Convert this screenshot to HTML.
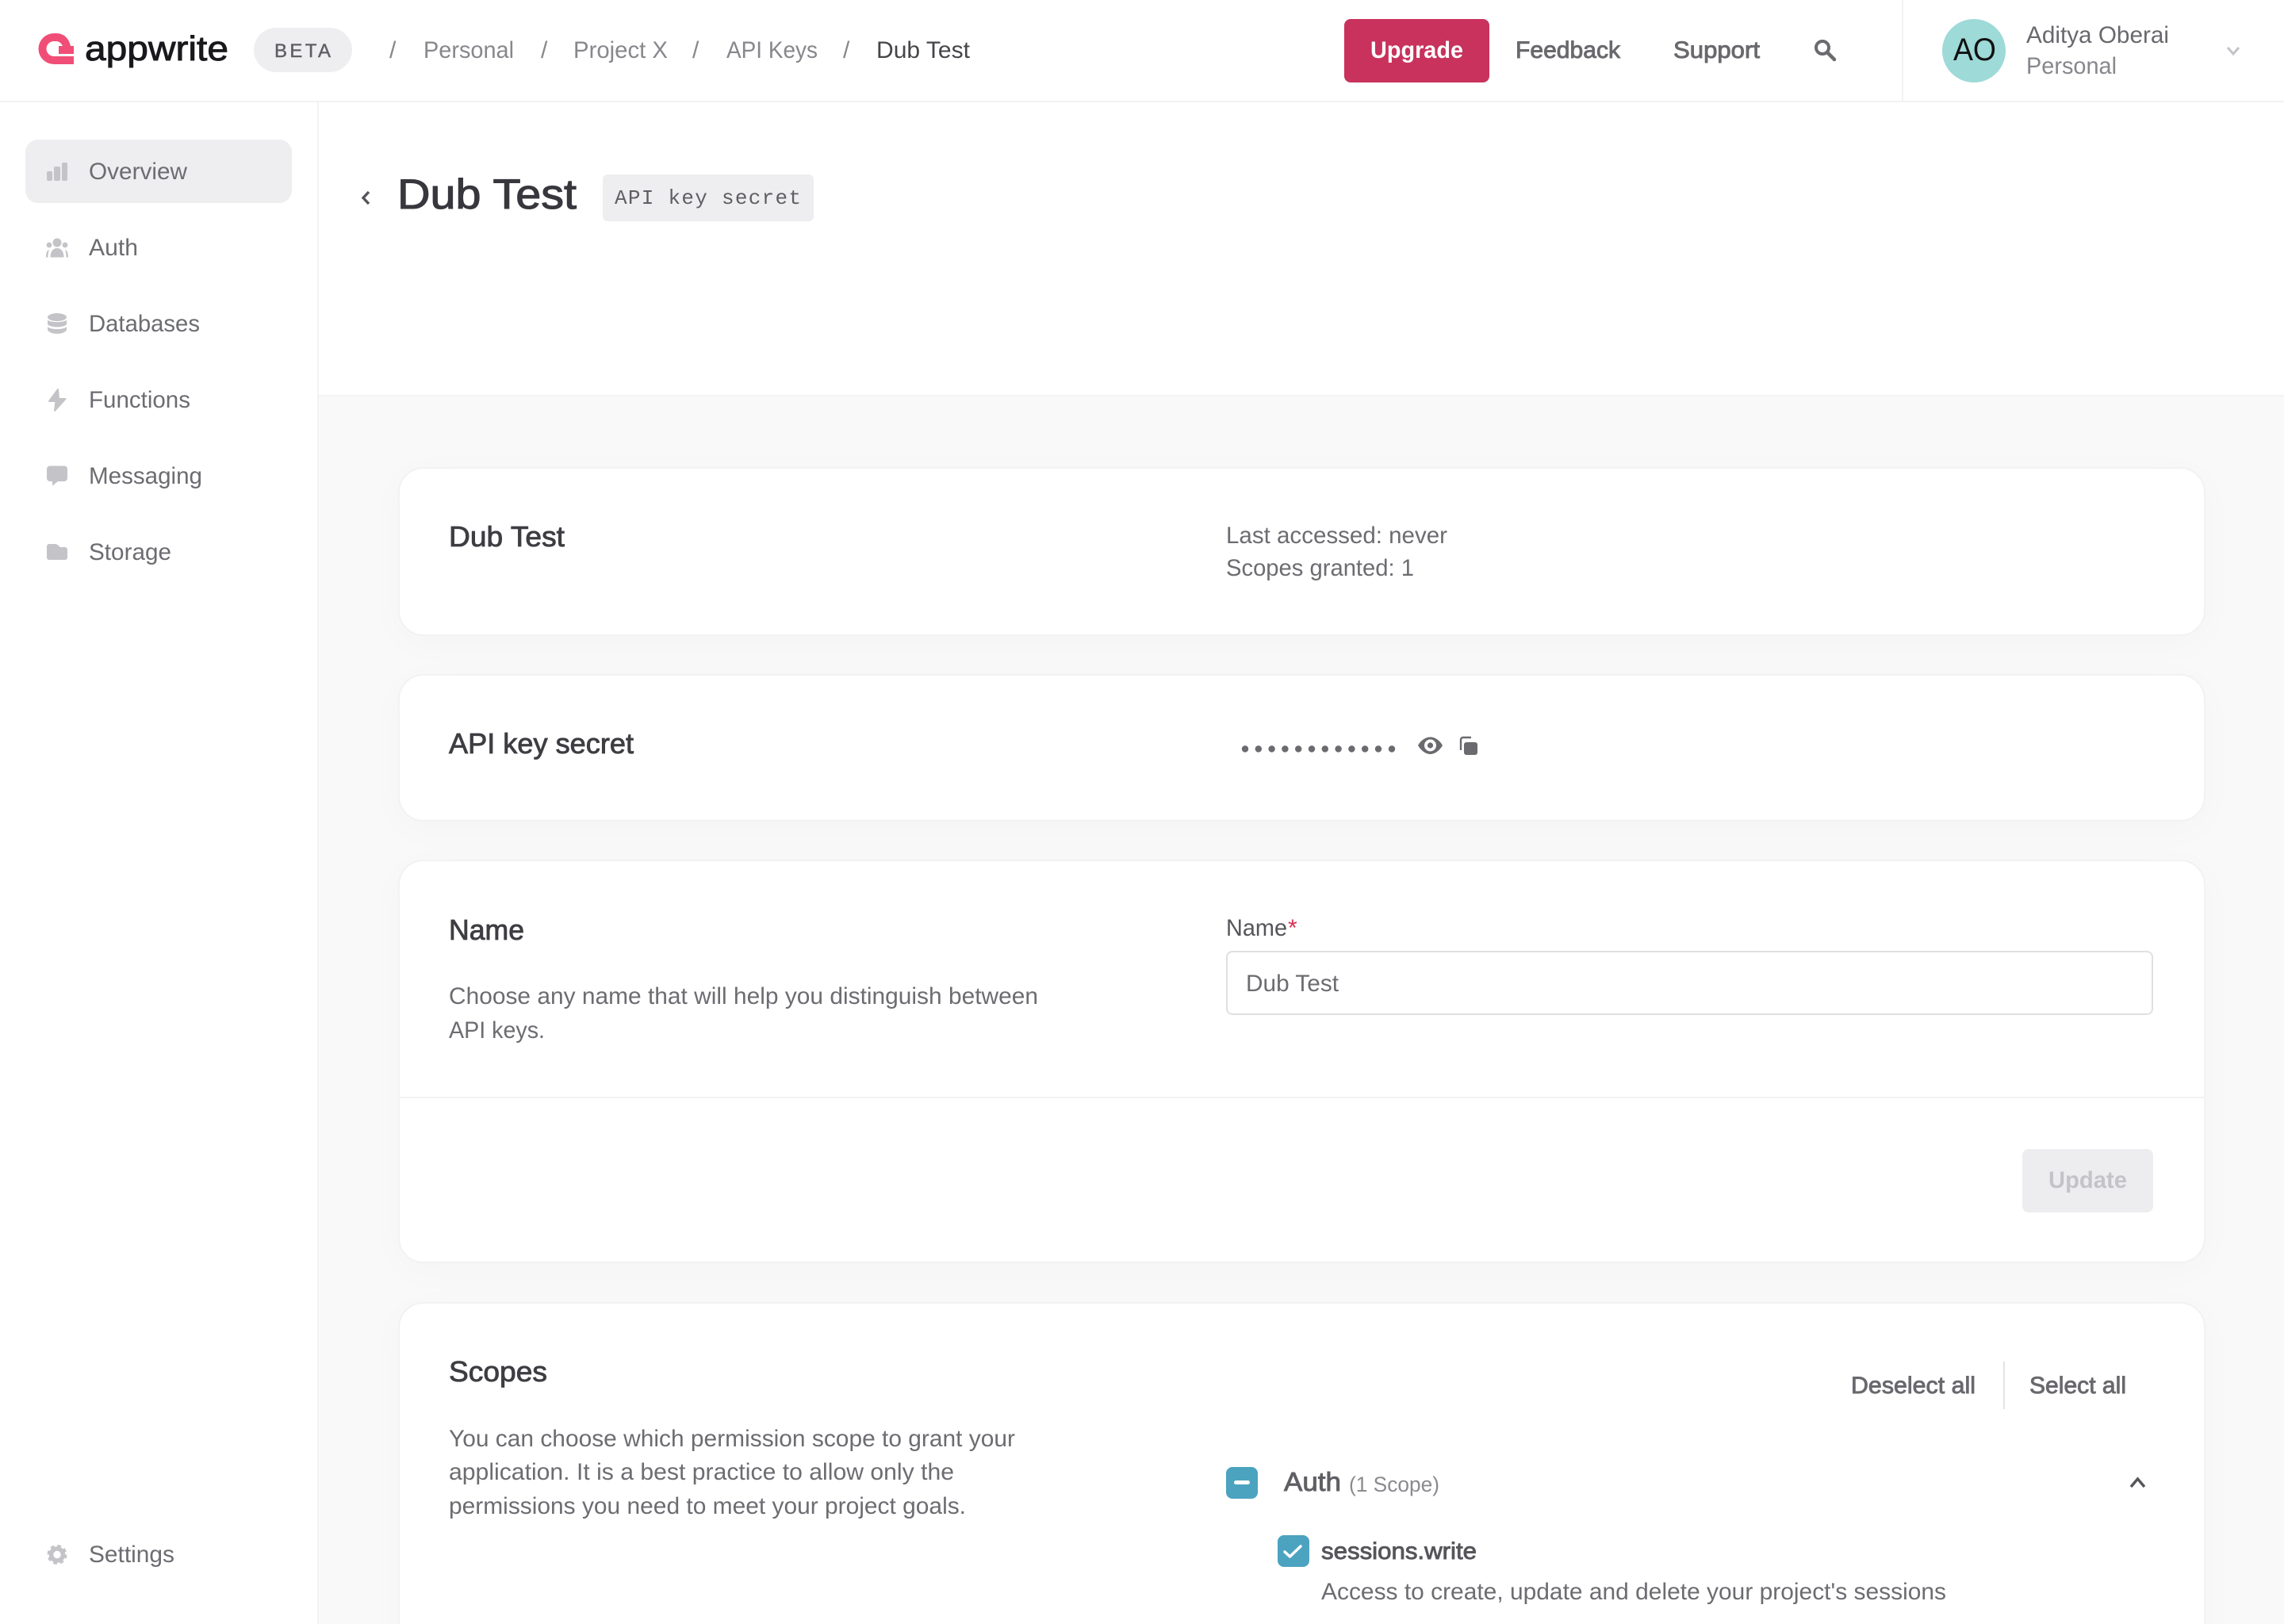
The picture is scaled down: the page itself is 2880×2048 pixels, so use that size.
<!DOCTYPE html>
<html><head><meta charset="utf-8"><title>Dub Test</title>
<style>
html,body{margin:0;padding:0;width:2880px;height:2048px;overflow:hidden;background:#f9f9f9}
#wrap{position:relative;width:2880px;height:2048px;overflow:hidden;background:#f9f9f9}
.b{position:absolute;box-sizing:border-box}
.card{position:absolute;left:502px;width:2279px;background:#fff;border:2px solid #f2f2f3;border-radius:32px;box-sizing:border-box;box-shadow:0 10px 50px rgba(0,0,0,.022)}
svg{position:absolute;left:0;top:0}
text{font-family:"Liberation Sans",sans-serif;font-size:30px;fill:#6c6c71}
.m{stroke:currentColor;stroke-width:.6px}
.h{font-size:36px;fill:#3d3d42;color:#3d3d42;stroke-width:.85px}
</style></head><body>
<div id="wrap">
<div class="b" style="left:0;top:0;width:2880px;height:129px;background:#fff;border-bottom:2px solid #f2f2f3"></div>
<div class="b" style="left:0;top:129px;width:402px;height:1919px;background:#fff;border-right:2px solid #f3f3f4"></div>
<div class="b" style="left:402px;top:129px;width:2478px;height:371px;background:#fff;border-bottom:2px solid #f3f3f4"></div>
<div class="b" style="left:2398px;top:0;width:2px;height:127px;background:#f3f3f4"></div>
<div class="b" style="left:32px;top:176px;width:336px;height:80px;background:#eeeef0;border-radius:16px"></div>
<div class="b" style="left:320px;top:35px;width:124px;height:56px;background:#eeeef0;border-radius:28px"></div>
<div class="b" style="left:1695px;top:24px;width:183px;height:80px;background:#c8325c;border-radius:8px"></div>
<div class="b" style="left:2449px;top:24px;width:80px;height:80px;background:#9ddad8;border-radius:50%"></div>
<div class="b" style="left:760px;top:220px;width:266px;height:59px;background:#eeeef0;border-radius:6px"></div>
<div class="card" style="top:589px;height:213px"></div>
<div class="card" style="top:850px;height:186px"></div>
<div class="card" style="top:1084px;height:509px"></div>
<div class="card" style="top:1642px;height:440px"></div>
<div class="b" style="left:504px;top:1383px;width:2275px;height:2px;background:#f2f2f3"></div>
<div class="b" style="left:1546px;top:1199px;width:1169px;height:81px;background:#fff;border:2px solid #e0e0e3;border-radius:8px"></div>
<div class="b" style="left:2550px;top:1449px;width:165px;height:80px;background:#ededef;border-radius:8px"></div>
<div class="b" style="left:2526px;top:1717px;width:2px;height:60px;background:#e3e3e5"></div>
<div class="b" style="left:1546px;top:1850px;width:40px;height:40px;background:#4ba3c0;border-radius:8px"></div>
<div class="b" style="left:1611px;top:1936px;width:40px;height:40px;background:#4ba3c0;border-radius:8px"></div>

<svg width="2880" height="2048" viewBox="0 0 2880 2048" xmlns="http://www.w3.org/2000/svg">
<!-- logo -->
<path fill="#f04e76" d="M93 71V81H68A19.500 19.500 0 1 1 68 42H71C80 42 87 48 89 58H79C77 54 74 52 71 52H68A9.500 9.500 0 0 0 68 71Z"/>
<rect x="74" y="58" width="19" height="10" fill="#f04e76"/>
<text x="107" y="76" textLength="181" lengthAdjust="spacingAndGlyphs" style="font-size:44px;fill:#19191d;stroke:#19191d;stroke-width:.9px">appwrite</text>
<text x="346" y="72" textLength="71" lengthAdjust="spacing" style="font-size:24px;fill:#5f5f63;stroke:#5f5f63;stroke-width:.4px">BETA</text>
<!-- breadcrumbs -->
<text x="491" y="73" style="fill:#87878c">/</text>
<text x="534" y="73" textLength="114" lengthAdjust="spacingAndGlyphs" style="fill:#87878c">Personal</text>
<text x="682" y="73" style="fill:#87878c">/</text>
<text x="723" y="73" textLength="119" lengthAdjust="spacingAndGlyphs" style="fill:#87878c">Project X</text>
<text x="873" y="73" style="fill:#87878c">/</text>
<text x="916" y="73" textLength="115" lengthAdjust="spacingAndGlyphs" style="fill:#87878c">API Keys</text>
<text x="1063" y="73" style="fill:#87878c">/</text>
<text x="1105" y="73" textLength="118" lengthAdjust="spacingAndGlyphs" style="fill:#45454a">Dub Test</text>
<text x="1728" y="73" textLength="117" lengthAdjust="spacingAndGlyphs" style="fill:#fff;font-weight:bold">Upgrade</text>
<text x="1911" y="73" textLength="132" lengthAdjust="spacingAndGlyphs" class="m" style="color:#68686d;fill:#68686d;stroke-width:.9px">Feedback</text>
<text x="2110" y="73" textLength="109" lengthAdjust="spacingAndGlyphs" class="m" style="color:#68686d;fill:#68686d;stroke-width:.9px">Support</text>
<circle cx="2298" cy="60" r="8" fill="none" stroke="#6a6a6f" stroke-width="4"/>
<path d="M2304 66L2313 75" stroke="#6a6a6f" stroke-width="4.500" stroke-linecap="round"/>
<text x="2463" y="76" textLength="54" lengthAdjust="spacingAndGlyphs" style="font-size:40px;fill:#111">AO</text>
<text x="2555" y="54" textLength="180" lengthAdjust="spacingAndGlyphs" style="fill:#68686d">Aditya Oberai</text>
<text x="2555" y="93" textLength="114" lengthAdjust="spacingAndGlyphs" style="fill:#87878c">Personal</text>
<path d="M2809 60L2816 68L2823 60" fill="none" stroke="#c4c4c8" stroke-width="3"/>

<!-- sidebar -->
<g fill="#c4c4c8">
<rect x="59" y="216" width="7" height="12" rx="2"/><rect x="68" y="210" width="8" height="18" rx="2"/><rect x="78" y="205" width="7" height="23" rx="2"/>
<circle cx="72" cy="306" r="5.500"/><circle cx="62" cy="309" r="3.400"/><circle cx="82" cy="309" r="3.400"/>
<path d="M63.500 324.500C63.500 317 67 313 72 313S80.500 317 80.500 324.500Z"/><path d="M58 324.500C58 319 59 316 62 315C60.800 318 60.500 321 60.500 324.500ZM86 324.500C86 319 85 316 82 315C83.200 318 83.500 321 83.500 324.500Z"/>
<ellipse cx="72" cy="400" rx="12" ry="5"/>
<path d="M60 403.500C63 407 81 407 84 403.500V409C81 413.500 63 413.500 60 409Z"/>
<path d="M60 412C63 416 81 416 84 412V416C81 422.500 63 422.500 60 416Z"/>
<path d="M73 491L62 506H70.500L69 518L82.500 503H74Z" stroke="#c4c4c8" stroke-width="2" stroke-linejoin="round"/>
<path d="M63 587.500H81A4 4 0 0 1 85 591.500V603A4 4 0 0 1 81 607H73L66 612.700V607H63A4 4 0 0 1 59 603V591.500A4 4 0 0 1 63 587.500Z"/>
<path d="M62 686H71L76 690H82A3 3 0 0 1 85 693V703A3 3 0 0 1 82 706H62A3 3 0 0 1 59 703V689A3 3 0 0 1 62 686Z"/>
</g>
<circle cx="72" cy="1960.500" r="7.500" fill="none" stroke="#c4c4c8" stroke-width="5.500"/>
<circle cx="72" cy="1960.500" r="10.500" fill="none" stroke="#c4c4c8" stroke-width="4" stroke-dasharray="4.500 3.750"/>
<text x="112" y="226" textLength="124" lengthAdjust="spacingAndGlyphs">Overview</text>
<text x="112" y="322" textLength="62" lengthAdjust="spacingAndGlyphs">Auth</text>
<text x="112" y="418" textLength="140" lengthAdjust="spacingAndGlyphs">Databases</text>
<text x="112" y="514" textLength="128" lengthAdjust="spacingAndGlyphs">Functions</text>
<text x="112" y="610" textLength="143" lengthAdjust="spacingAndGlyphs">Messaging</text>
<text x="112" y="706" textLength="104" lengthAdjust="spacingAndGlyphs">Storage</text>
<text x="112" y="1970" textLength="108" lengthAdjust="spacingAndGlyphs">Settings</text>

<!-- title -->
<path d="M465 242L458 249.500L465 257" fill="none" stroke="#55555a" stroke-width="3.400"/>
<text x="501" y="263" textLength="226" lengthAdjust="spacingAndGlyphs" style="font-size:53px;fill:#37373d;stroke:#37373d;stroke-width:1.1px">Dub Test</text>
<text x="775" y="257" textLength="235" lengthAdjust="spacing" style="font-family:'Liberation Mono',monospace;font-size:26px;fill:#5f5f63">API key secret</text>

<!-- card 1 -->
<text x="566" y="689" textLength="146" lengthAdjust="spacingAndGlyphs" class="h m">Dub Test</text>
<text x="1546" y="685" textLength="279" lengthAdjust="spacingAndGlyphs">Last accessed: never</text>
<text x="1546" y="726" textLength="237" lengthAdjust="spacingAndGlyphs">Scopes granted: 1</text>
<!-- card 2 -->
<text x="566" y="950" textLength="233" lengthAdjust="spacingAndGlyphs" class="h m">API key secret</text>
<g fill="#6a6a6f">
<circle cx="1570" cy="944.500" r="4.200"/><circle cx="1586.800" cy="944.500" r="4.200"/><circle cx="1603.600" cy="944.500" r="4.200"/><circle cx="1620.400" cy="944.500" r="4.200"/><circle cx="1637.200" cy="944.500" r="4.200"/><circle cx="1654" cy="944.500" r="4.200"/><circle cx="1670.800" cy="944.500" r="4.200"/><circle cx="1687.600" cy="944.500" r="4.200"/><circle cx="1704.400" cy="944.500" r="4.200"/><circle cx="1721.200" cy="944.500" r="4.200"/><circle cx="1738" cy="944.500" r="4.200"/><circle cx="1755" cy="944.500" r="4.200"/>
<path fill-rule="evenodd" d="M1788 940C1792 933 1798 929.500 1803.500 929.500S1815 933 1819 940C1815 947 1809 951 1803.500 951S1792 947 1788 940ZM1803.500 932.500A7.500 7.500 0 1 0 1803.500 947.500A7.500 7.500 0 1 0 1803.500 932.500Z"/>
<circle cx="1803.500" cy="940" r="3.600"/>
<rect x="1846" y="936" width="17" height="16" rx="3"/>
</g>
<path d="M1842 946V933A3 3 0 0 1 1845 930H1855" fill="none" stroke="#6a6a6f" stroke-width="2.400"/>
<!-- card 3 -->
<text x="566" y="1185" textLength="95" lengthAdjust="spacingAndGlyphs" class="h m">Name</text>
<text x="566" y="1266" textLength="743" lengthAdjust="spacingAndGlyphs">Choose any name that will help you distinguish between</text>
<text x="566" y="1309" textLength="121" lengthAdjust="spacingAndGlyphs">API keys.</text>
<text x="1546" y="1180" textLength="77" lengthAdjust="spacingAndGlyphs" style="fill:#55555a">Name</text>
<text x="1624" y="1180" style="fill:#d8324f">*</text>
<text x="1571" y="1250" textLength="117" lengthAdjust="spacingAndGlyphs">Dub Test</text>
<text x="2583" y="1498" textLength="99" lengthAdjust="spacingAndGlyphs" style="fill:#c4c4c8;font-weight:bold">Update</text>
<!-- card 4 -->
<text x="566" y="1742" textLength="124" lengthAdjust="spacingAndGlyphs" class="h m">Scopes</text>
<text x="566" y="1824" textLength="714" lengthAdjust="spacingAndGlyphs">You can choose which permission scope to grant your</text>
<text x="566" y="1866" textLength="637" lengthAdjust="spacingAndGlyphs">application. It is a best practice to allow only the</text>
<text x="566" y="1909" textLength="652" lengthAdjust="spacingAndGlyphs">permissions you need to meet your project goals.</text>
<text x="2334" y="1757" textLength="157" lengthAdjust="spacingAndGlyphs" class="m" style="color:#68686d;fill:#68686d;stroke-width:.9px">Deselect all</text>
<text x="2559" y="1757" textLength="122" lengthAdjust="spacingAndGlyphs" class="m" style="color:#68686d;fill:#68686d;stroke-width:.9px">Select all</text>
<rect x="1556" y="1867" width="20" height="5" rx="2.500" fill="#fff"/>
<path d="M1620 1957L1626.500 1963L1640 1950" fill="none" stroke="#fff" stroke-width="3.500" stroke-linecap="round" stroke-linejoin="round"/>
<text x="1619" y="1880" textLength="72" lengthAdjust="spacingAndGlyphs" class="m" style="font-size:33px;color:#5f5f64;fill:#5f5f64;stroke-width:.9px">Auth</text>
<text x="1701" y="1881" textLength="114" lengthAdjust="spacingAndGlyphs" style="font-size:27px;fill:#8a8a8f">(1 Scope)</text>
<path d="M2687 1875L2695.500 1865L2704 1875" fill="none" stroke="#55555a" stroke-width="3.400"/>
<text x="1666" y="1966" textLength="196" lengthAdjust="spacingAndGlyphs" class="m" style="color:#55555a;fill:#55555a;stroke-width:.9px">sessions.write</text>
<text x="1666" y="2017" textLength="788" lengthAdjust="spacingAndGlyphs">Access to create, update and delete your project's sessions</text>
</svg>
</div>
</body></html>
